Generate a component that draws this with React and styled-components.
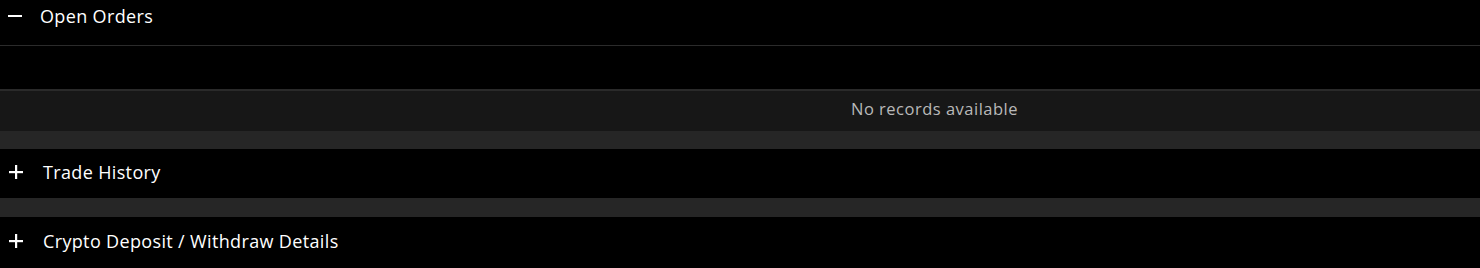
import React from "react";
import styled, { createGlobalStyle } from "styled-components";

const GlobalStyle = createGlobalStyle`
  body {
    margin: 0;
    background: #000;
    font-family: "Open Sans", "Liberation Sans", sans-serif;
  }
`;

const MinusIcon = () => (
  <svg width="14" height="14" viewBox="0 0 14 14">
    <rect x="0" y="6" width="14" height="2" fill="#fff" />
  </svg>
);

const PlusIcon = () => (
  <svg width="14" height="14" viewBox="0 0 14 14">
    <rect x="0" y="6" width="14" height="2.2" fill="#fff" />
    <rect x="6" y="0" width="2.2" height="14" fill="#fff" />
  </svg>
);

const App = () => {
  return (
    <Page>
      <GlobalStyle />
      <Header $height={46} $open>
        <IconBox $left={8}>
          <MinusIcon />
        </IconBox>
        <Title $gap={18}>Open Orders</Title>
      </Header>
      <TableHead />
      <EmptyRow>
        <EmptyText>No records available</EmptyText>
      </EmptyRow>
      <Band $height={18} />
      <Header $height={49}>
        <IconBox $left={9}>
          <PlusIcon />
        </IconBox>
        <Title $gap={20}>Trade History</Title>
      </Header>
      <Band $height={19} />
      <Header $height={51}>
        <IconBox $left={9}>
          <PlusIcon />
        </IconBox>
        <Title $gap={20}>Crypto Deposit / Withdraw Details</Title>
      </Header>
    </Page>
  );
};

const Page = styled.div`
  width: 1480px;
  background: #000;
  display: flex;
  flex-direction: column;
`;

const Header = styled.div`
  height: ${(p) => p.$height}px;
  box-sizing: border-box;
  display: flex;
  align-items: center;
  padding-bottom: ${(p) => (p.$open ? 13 : 3)}px;
  border-bottom: ${(p) => (p.$open ? "1px solid #2b2b2b" : "none")};
  cursor: pointer;
`;

const IconBox = styled.span`
  display: flex;
  align-items: center;
  padding-left: ${(p) => p.$left}px;
`;

const Title = styled.span`
  margin-left: ${(p) => p.$gap}px;
  color: #fff;
  font-size: 18px;
  letter-spacing: 0.35px;
`;

const TableHead = styled.div`
  height: 43px;
  border-bottom: 2px solid #2a2a2a;
`;

const EmptyRow = styled.div`
  height: 40px;
  box-sizing: border-box;
  padding-bottom: 5px;
  background: #171717;
  display: flex;
  align-items: center;
  justify-content: center;
  padding-left: 389px;
`;

const EmptyText = styled.span`
  color: #b9b9b9;
  font-size: 16.5px;
  letter-spacing: 0.5px;
`;

const Band = styled.div`
  height: ${(p) => p.$height}px;
  background: #262626;
`;

export default App;
